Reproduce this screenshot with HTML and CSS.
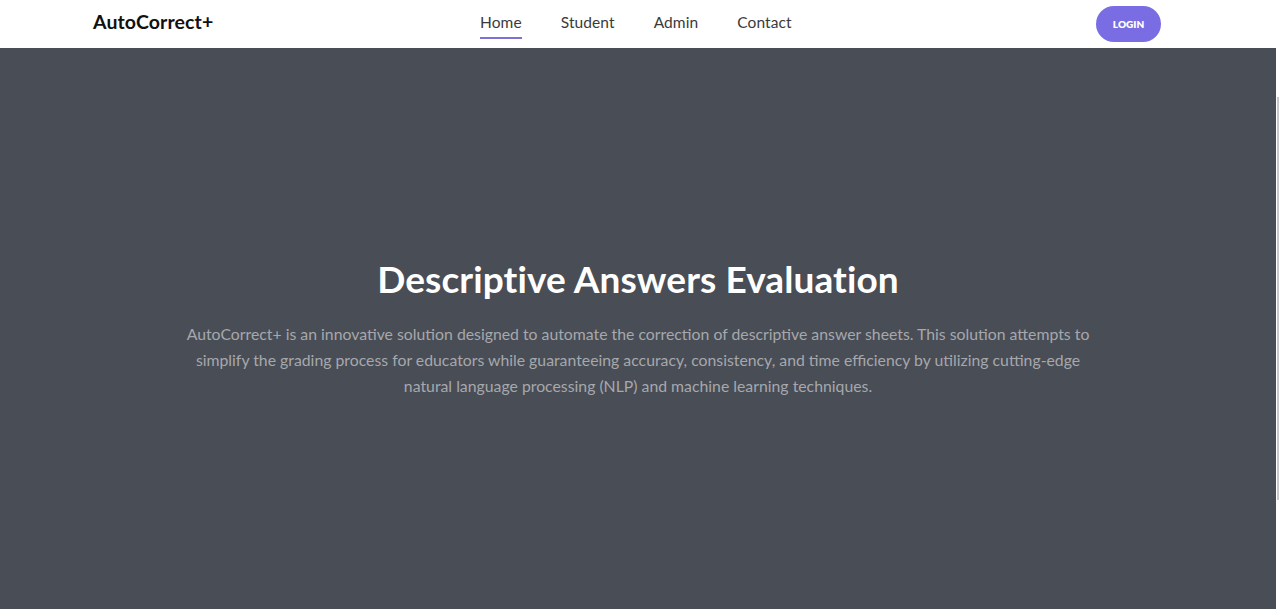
FILE: index.html
```html
<!DOCTYPE html>
<html lang="en">
<head>
<meta charset="utf-8">
<title>AutoCorrect+</title>
<link rel="stylesheet" href="styles.css">
</head>
<body>
<div class="page">
  <header class="topbar">
    <div class="logo">AutoCorrect+</div>
    <nav class="nav">
      <a class="nav-link active" href="#">Home</a>
      <a class="nav-link" href="#">Student</a>
      <a class="nav-link" href="#">Admin</a>
      <a class="nav-link" href="#">Contact</a>
    </nav>
    <a class="login" href="#">LOGIN</a>
  </header>
  <section class="hero">
    <div class="hero-inner">
      <h1 class="hero-title">Descriptive Answers Evaluation</h1>
      <p class="hero-text">AutoCorrect+ is an innovative solution designed to automate the correction of descriptive answer sheets. This solution attempts to simplify the grading process for educators while guaranteeing accuracy, consistency, and time efficiency by utilizing cutting-edge natural language processing (NLP) and machine learning techniques.</p>
    </div>
  </section>
</div>
<div class="scrollstrip"><div class="thumb"></div></div>
</body>
</html>
```
FILE: styles.css
```css
* { box-sizing: border-box; }
html, body { margin: 0; padding: 0; height: 100%; overflow: hidden; }
body {
  font-family: "Lato", "Open Sans", sans-serif;
  background: #ffffff;
}
.page {
  width: 1276px;
  display: flex;
  flex-direction: column;
  height: 609px;
}
.topbar {
  height: 48px;
  background: #ffffff;
  display: flex;
  align-items: center;
  padding: 0 115px 0 93px;
}
.logo {
  font-weight: 700;
  font-size: 19.5px;
  color: #111111;
  letter-spacing: 0.1px;
  width: 387px;
  padding-bottom: 5px;
}
.nav {
  display: flex;
  gap: 39px;
  flex: 1;
  align-items: center;
}
.nav-link {
  font-size: 15.5px;
  letter-spacing: 0.1px;
  color: #3a3a3a;
  text-decoration: none;
  padding: 2px 0 6px;
  border-bottom: 2px solid transparent;
  margin-top: 1px;
}
.nav-link.active {
  border-bottom-color: #7d72d3;
}
.login {
  width: 65px;
  height: 36px;
  border-radius: 18px;
  background: #7a6de3;
  color: #ffffff;
  font-size: 10px;
  font-weight: 800;
  text-decoration: none;
  display: flex;
  align-items: center;
  justify-content: center;
  margin-bottom: 1px;
}
.hero {
  flex: 1;
  background: #494d55;
  display: flex;
  align-items: center;
  justify-content: center;
}
.hero-inner {
  width: 906px;
  text-align: center;
  margin-top: -3px;
}
.hero-title {
  margin: 0 0 20px;
  color: #ffffff;
  font-size: 37px;
  font-weight: 700;
  letter-spacing: 0.1px;
}
.hero-text {
  margin: 0;
  color: #a6a8ad;
  font-size: 15.8px;
  line-height: 26px;
}
.scrollstrip {
  position: absolute;
  top: 0;
  right: 0;
  width: 4px;
  height: 609px;
  background: #ffffff;
}
.thumb {
  position: absolute;
  top: 97px;
  left: 1px;
  width: 2px;
  height: 403px;
  background: #c8c8c8;
}
```
